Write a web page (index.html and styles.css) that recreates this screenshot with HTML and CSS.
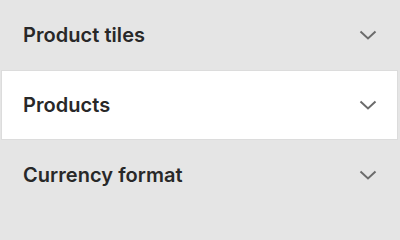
FILE: index.html
```html
<!DOCTYPE html>
<html>
<head>
<meta charset="utf-8">
<link rel="stylesheet" href="styles.css">
</head>
<body>
<div class="list">
  <div class="row">
    <span class="label">Product tiles</span>
    <svg class="chev" width="18" height="10" viewBox="0 0 18 10"><path d="M1.5 1.5 L9 8.5 L16.5 1.5" fill="none" stroke="#6b6b6b" stroke-width="2"/></svg>
  </div>
  <div class="row active">
    <span class="label">Products</span>
    <svg class="chev" width="18" height="10" viewBox="0 0 18 10"><path d="M1.5 1.5 L9 8.5 L16.5 1.5" fill="none" stroke="#6b6b6b" stroke-width="2"/></svg>
  </div>
  <div class="row">
    <span class="label">Currency format</span>
    <svg class="chev" width="18" height="10" viewBox="0 0 18 10"><path d="M1.5 1.5 L9 8.5 L16.5 1.5" fill="none" stroke="#6b6b6b" stroke-width="2"/></svg>
  </div>
</div>
</body>
</html>
```
FILE: styles.css
```css
html, body {
  margin: 0;
  padding: 0;
  background: #e5e5e5;
}
.list {
  width: 400px;
  height: 210px;
  display: flex;
  flex-direction: column;
  font-family: Inter, "Noto Sans", sans-serif;
}
.row {
  height: 70px;
  box-sizing: border-box;
  display: flex;
  align-items: center;
  justify-content: space-between;
  padding: 0 23px 0 23px;
  background: #e5e5e5;
}
.row.active {
  background: #ffffff;
  border: 1px solid #dcdcdc;
  margin: 0 2px 0 1px;
  padding: 0 20px 0 21px;
}
.label {
  font-size: 20px;
  font-weight: 600;
  color: #282828;
  letter-spacing: 0.05px;
}
.chev {
  display: block;
}
```
